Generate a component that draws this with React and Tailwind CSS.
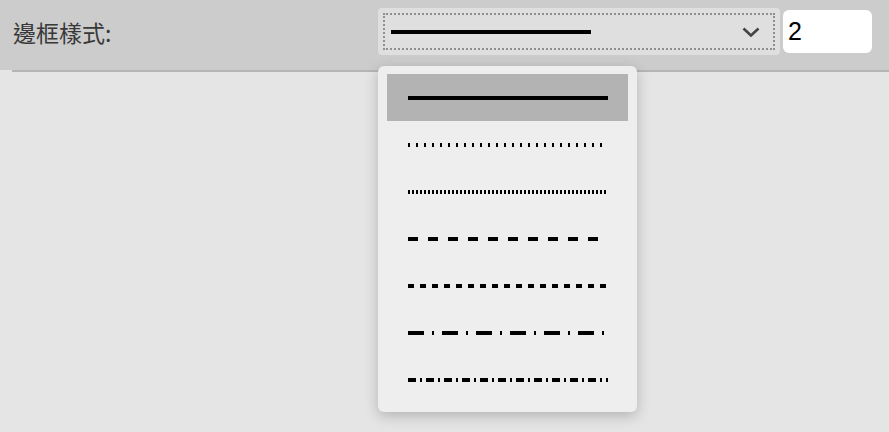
import { useState } from 'react';

const STYLES = [
  { id: 'solid', dash: null },
  { id: 'dotted', dash: '2 6' },
  { id: 'fine', dash: '2 2' },
  { id: 'dashed', dash: '10 10' },
  { id: 'short', dash: '6 6' },
  { id: 'dashdot', dash: '16 8 2 8' },
  { id: 'dashdotsmall', dash: '8 4 2 4' },
];

const LineSample = ({ dash }) => (
  <svg width="200" height="4" viewBox="0 0 200 4" className="block">
    <line x1="0" y1="2" x2="200" y2="2" stroke="#000" strokeWidth="4" strokeDasharray={dash || undefined} />
  </svg>
);

const App = () => {
  const [selected, setSelected] = useState('solid');
  const [width, setWidth] = useState('2');
  const current = STYLES.find((s) => s.id === selected);

  return (
    <div
      className="relative w-[889px] h-[432px] bg-[#e5e5e5] overflow-hidden"
      style={{ fontFamily: '"Liberation Sans", "Noto Sans CJK TC", sans-serif' }}
    >
      {/* Toolbar */}
      <div className="h-[70px] bg-[#cccccc] flex items-start pt-[8px]">
        <div
          className="w-[378px] pl-[13px] pt-[9px] text-[23px] leading-[30px] text-[#383838]"
          style={{ fontFamily: '"Noto Sans CJK TC", sans-serif' }}
        >
          邊框樣式:
        </div>
        <div className="w-[402px] h-[47px] rounded-[4px] bg-[#dfdfdf] p-[5px]">
          <div className="h-full border-2 border-dotted border-[#8f8f8f] flex items-center pl-[6px] pr-[13px]">
            <LineSample dash={current.dash} />
            <svg width="18" height="10" viewBox="0 0 18 10" className="ml-auto">
              <path d="M1.5 1.5 L9 8.5 L16.5 1.5" fill="none" stroke="#444" strokeWidth="2.6" />
            </svg>
          </div>
        </div>
        <input
          value={width}
          onChange={(e) => setWidth(e.target.value)}
          className="ml-[3px] mt-[2px] w-[89px] h-[43px] rounded-[6px] bg-white pl-[5px] text-[25px] text-black outline-none"
        />
      </div>
      <div className="ml-3 h-[2px] bg-[#b5b5b5]" />

      {/* Dropdown menu */}
      <div className="absolute left-[378px] top-[66px] w-[259px] h-[346px] rounded-[6px] bg-[#eeeeee] shadow-[0_4px_14px_rgba(0,0,0,0.22)] px-[9px] pt-[8px]">
        {STYLES.map((s) => (
          <div
            key={s.id}
            onClick={() => setSelected(s.id)}
            className={`h-[47px] flex items-center pl-[21px] cursor-pointer ${s.id === selected ? 'bg-[#b3b3b3]' : ''}`}
          >
            <LineSample dash={s.dash} />
          </div>
        ))}
      </div>
    </div>
  );
};

export default App;
